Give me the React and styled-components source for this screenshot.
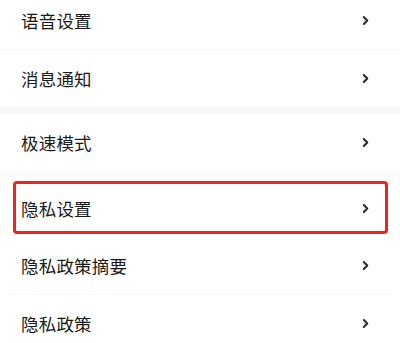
import styled, { createGlobalStyle } from 'styled-components';

const GlobalStyle = createGlobalStyle`
  html, body {
    margin: 0;
    padding: 0;
    background: #ffffff;
    overflow: hidden;
  }
  body {
    font-family: "Noto Sans CJK SC", "Noto Sans", sans-serif;
  }
`;

const Page = styled.div`
  width: 400px;
  height: 343px;
  overflow: hidden;
  background: #ffffff;
`;

// list is scrolled a little, first row is cut at the top
const List = styled.div`
  margin-top: -8px;
  display: flex;
  flex-direction: column;
`;

const Row = styled.div`
  height: 57px;
  display: flex;
  align-items: center;
  justify-content: space-between;
  padding: 0 31px 0 21px;
  box-sizing: border-box;
`;

const Label = styled.span`
  font-size: 17.5px;
  font-weight: 400;
  color: #1a1a1a;
  letter-spacing: 0.2px;
`;

const Divider = styled.div`
  height: 1px;
  background: #f5f5f5;
  margin: 0 ${p => p.inset || 0}px;
`;

const Gap = styled.div`
  height: ${p => p.size}px;
  background: ${p => p.color || '#f8f8f8'};
`;

const HighlightWrap = styled.div`
  padding: 4px 12px 3px 13px;
`;

const HighlightBox = styled.div`
  height: 53px;
  box-sizing: border-box;
  border: 3px solid #ee2424;
  border-radius: 4px;
  display: flex;
  align-items: center;
  justify-content: space-between;
  padding: 2px 16px 0 5px;
`;

function Chevron() {
  return (
    <svg width="7" height="11" viewBox="0 0 7 11">
      <path d="M1.8 2 L5.3 5.5 L1.8 9" fill="none" stroke="#2a2a2a" strokeWidth="2" strokeLinecap="round" strokeLinejoin="round" />
    </svg>
  );
}

function Item({ title }) {
  return (
    <Row>
      <Label>{title}</Label>
      <Chevron />
    </Row>
  );
}

export default function App() {
  return (
    <>
      <GlobalStyle />
      <Page>
        <List>
          <Item title="语音设置" />
          <Divider />
          <Item title="消息通知" />
          <Gap size={7} />
          <Item title="极速模式" />
          <Gap size={6} color="#fbfbfb" />
          <HighlightWrap>
            <HighlightBox>
              <Label>隐私设置</Label>
              <Chevron />
            </HighlightBox>
          </HighlightWrap>
          <Item title="隐私政策摘要" />
          <Divider inset={8} />
          <Item title="隐私政策" />
        </List>
      </Page>
    </>
  );
}
